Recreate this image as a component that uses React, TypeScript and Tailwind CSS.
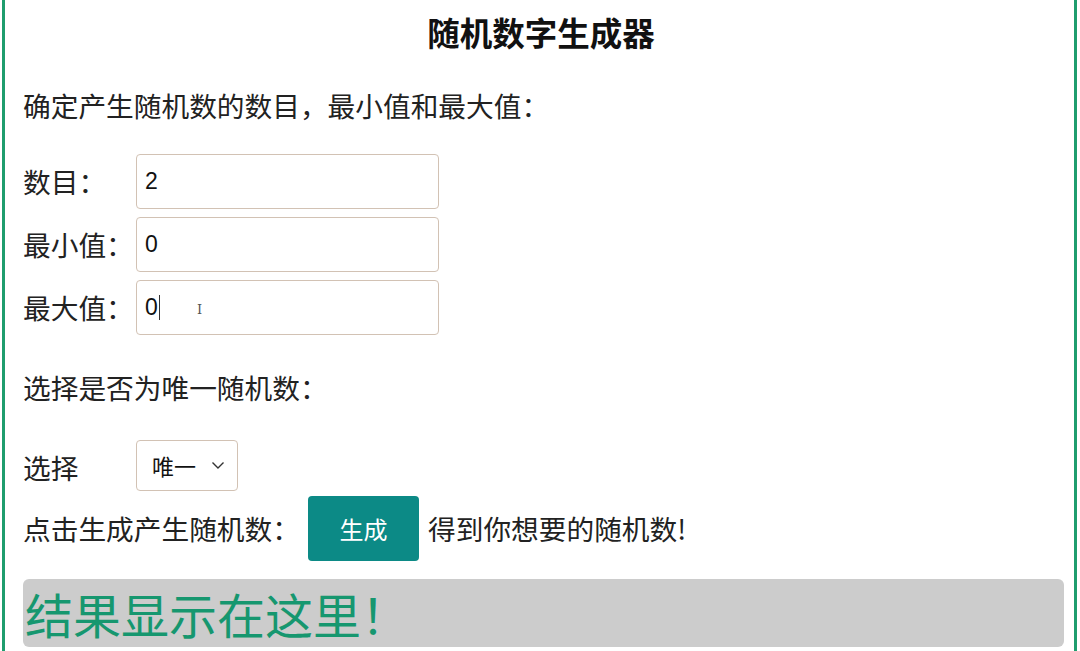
import React from "react";

const font = { fontFamily: '"Microsoft YaHei", "Noto Sans CJK SC", "Noto Sans", sans-serif' };

export default function App() {
  return (
    <div className="w-[1080px] h-[651px] overflow-hidden bg-white pl-[2px]" style={font}>
      <div className="w-[1075px] h-[651px] border-x-[3px] border-[#1f9d6e] pl-[18px] pr-[10px] text-[#222] flex flex-col">
        <div className="h-[68px] flex items-center justify-center text-[32.5px] font-bold text-[#111] leading-none pr-[5px] pb-[3px]">
          随机数字生成器
        </div>
        <div className="h-[76px] flex items-center text-[27.7px] leading-none">
          确定产生随机数的数目，最小值和最大值：
        </div>
        <div className="flex flex-col gap-[8px] pt-[10px]">
          {[
            ["数目：", "2"],
            ["最小值：", "0"],
            ["最大值：", "0"],
          ].map(([label, val], i) => (
            <div key={i} className="flex items-center h-[55px]">
              <div className="w-[113px] text-[27.7px] leading-none whitespace-nowrap">{label}</div>
              <div className="relative w-[303px] h-[55px] border border-[#d2c2b4] rounded-[4px] flex items-center pl-[8px] text-[23px] text-[#111]" style={{ fontFamily: '"Liberation Sans", Arial, sans-serif' }}>
                <span>{val}</span>
                {i === 2 && <span className="inline-block w-[1px] h-[25px] bg-[#333] ml-[1px]" />}
                {i === 2 && <span className="absolute left-[60px] top-[19px] text-[13px] text-[#555]" style={{ fontFamily: '"DejaVu Serif", serif' }}>I</span>}
              </div>
            </div>
          ))}
        </div>
        <div className="h-[68px] flex items-end pb-[3px] text-[27.7px] leading-none mt-[2px]">
          选择是否为唯一随机数：
        </div>
        <div className="flex items-center mt-[35px] h-[51px]">
          <div className="w-[113px] text-[27.7px] leading-none pt-[5px]">选择</div>
          <div className="w-[102px] h-[51px] border border-[#d2c2b4] rounded-[4px] flex items-center pl-[15px] text-[22px] text-[#111]">
            <span>唯一</span>
            <svg className="ml-[15px]" width="14" height="9" viewBox="0 0 14 9" fill="none">
              <path d="M1.5 1.5 L7 7 L12.5 1.5" stroke="#333" strokeWidth="1.4" />
            </svg>
          </div>
        </div>
        <div className="flex items-center mt-[5px] h-[65px]">
          <div className="w-[285px] text-[27.7px] leading-none whitespace-nowrap">点击生成产生随机数：</div>
          <div className="w-[111px] h-[65px] bg-[#0c8a86] rounded-[4px] text-white text-[24px] flex items-center justify-center">
            生成
          </div>
          <div className="ml-[9px] text-[27.7px] leading-none">得到你想要的随机数!</div>
        </div>
        <div className="mt-[18px] h-[68px] bg-[#cccccc] rounded-[6px] flex items-center pl-[2px] text-[48px] leading-none text-[#16976f]">
          结果显示在这里！
        </div>
      </div>
    </div>
  );
}
